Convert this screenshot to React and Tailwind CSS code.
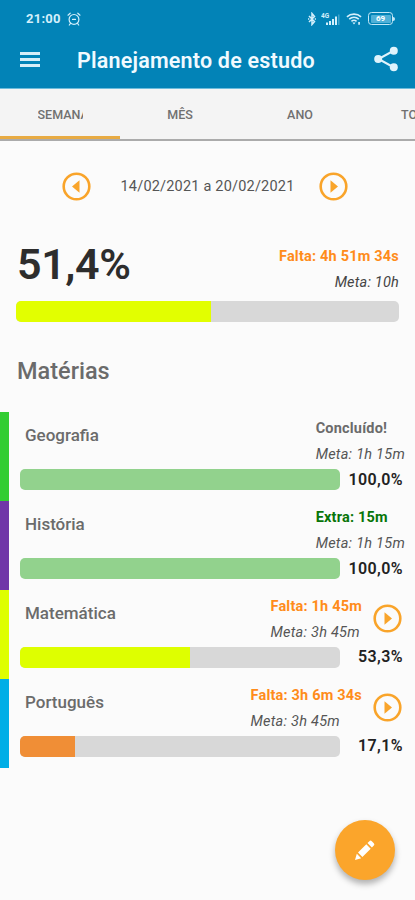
const subjects = [
  {
    name: "Geografia",
    stripe: "bg-[#32cd32]",
    fill: "bg-[#92d28d]",
    progress: 100,
    percent: "100,0%",
    status: "Concluído!",
    statusColor: "text-[#6b6b6b]",
    goal: "Meta: 1h 15m",
    playable: false,
  },
  {
    name: "História",
    stripe: "bg-[#7036a8]",
    fill: "bg-[#92d28d]",
    progress: 100,
    percent: "100,0%",
    status: "Extra: 15m",
    statusColor: "text-[#087508]",
    goal: "Meta: 1h 15m",
    playable: false,
  },
  {
    name: "Matemática",
    stripe: "bg-[#deff00]",
    fill: "bg-[#deff00]",
    progress: 53,
    percent: "53,3%",
    status: "Falta: 1h 45m",
    statusColor: "text-[#ff8c1a]",
    goal: "Meta: 3h 45m",
    playable: true,
  },
  {
    name: "Português",
    stripe: "bg-[#00aee6]",
    fill: "bg-[#f08e36]",
    progress: 17.1,
    percent: "17,1%",
    status: "Falta: 3h 6m 34s",
    statusColor: "text-[#ff8c1a]",
    goal: "Meta: 3h 45m",
    playable: true,
  },
];

function CircleArrow({ className = "" }) {
  return (
    <svg viewBox="0 0 29 29" className={`h-[29px] w-[29px] shrink-0 ${className}`}>
      <circle cx="14.5" cy="14.5" r="12.8" fill="none" stroke="#f9a42a" strokeWidth="2.6" />
      <path d="M11.5 8.3v12.4l7.5-6.2z" fill="#f9a42a" />
    </svg>
  );
}

function StatusBar() {
  return (
    <div className="flex h-[37px] items-center pl-[26px] pr-[20px] text-[#d4effb]">
      <span className="text-[13px] font-bold leading-none tracking-[0.25px]">21:00</span>
      <svg viewBox="0 0 14 14" className="ml-[6px] h-[14px] w-[14px]" fill="none" stroke="currentColor" strokeWidth="1.2" strokeLinecap="round">
        <circle cx="7" cy="7.4" r="4.9" />
        <path d="M1 3.2 3.2 1.2M13 3.2 10.8 1.2M3.5 11.4 2.3 13M10.5 11.4l1.2 1.6M5.5 7.4h3" />
      </svg>
      <div className="ml-auto flex items-center">
        <svg viewBox="0 0 8 14" className="h-[14px] w-[8px]" fill="none" stroke="currentColor" strokeWidth="1.5">
          <path d="M1 4l5.5 5.5L4 12.5v-11l2.5 3L1 10" />
          <path d="M0 7h1.3M6.7 7H8" />
        </svg>
        <svg viewBox="0 0 20 14" className="ml-[5px] h-[14px] w-[20px]" fill="currentColor">
          <text x="0" y="5.5" fontSize="6.5" fontWeight="700" fontFamily="Roboto">4G</text>
          <rect x="5" y="10.5" width="2" height="2.5" />
          <rect x="8" y="9" width="2" height="4" />
          <rect x="11" y="7" width="2" height="6" />
          <rect x="14" y="4.5" width="2" height="8.5" />
          <rect x="17" y="2.5" width="1.5" height="10.5" opacity="0.3" />
        </svg>
        <svg viewBox="0 0 17 14" className="ml-[5px] mr-[1px] h-[14px] w-[16px]" fill="none" stroke="currentColor" strokeWidth="1.7">
          <path d="M1 4.7c4.2-3.8 10.8-3.8 15 0M3.4 7.2c3-2.6 7.2-2.6 10.2 0M5.8 9.5c1.6-1.4 3.8-1.4 5.4 0" />
          <path d="M8.5 12.8 6.8 10.6h3.4zM13 10.2h1.8v2.8H13z" fill="currentColor" stroke="none" />
        </svg>
        <div className="ml-[5px] flex h-[13px] w-[25px] items-center justify-center rounded-[3.5px] border-[1.5px] border-[#c4e8f7]">
          <span className="flex h-[8px] w-[20px] items-center justify-center rounded-[1px] bg-[#4fb0d7] text-[8px] font-bold leading-none text-white">69</span>
        </div>
        <div className="h-[4px] w-[2px] rounded-r bg-[#c4e8f7]" />
      </div>
    </div>
  );
}

function Header() {
  return (
    <header className="h-[89px] border-b border-[#6dbcdc] bg-[#0283b7]">
      <StatusBar />
      <div className="flex h-[46px] items-center pl-[20px] pr-[16px]">
        <div className="flex w-[20px] flex-col gap-[3px] pb-[2px]">
          <div className="h-[3px] bg-[#d6eef8]" />
          <div className="h-[3px] bg-[#d6eef8]" />
          <div className="h-[3px] bg-[#d6eef8]" />
        </div>
        <h1 className="ml-[37px] whitespace-nowrap pt-[1px] text-[21.5px] font-semibold leading-none tracking-[0.2px] text-[#f0faff]">
          Planejamento de estudo
        </h1>
        <svg viewBox="0 0 26 26" className="mb-[2px] ml-auto h-[26px] w-[26px]" fill="#dff3fc">
          <path d="M21 4.5 5.5 13 21 21.5" fill="none" stroke="#dff3fc" strokeWidth="2" />
          <circle cx="20.8" cy="4.7" r="4" />
          <circle cx="5.2" cy="13" r="4" />
          <circle cx="20.8" cy="21.3" r="4" />
        </svg>
      </div>
    </header>
  );
}

function Tabs() {
  return (
    <nav className="h-[52px] overflow-hidden border-b-2 border-[#ababab] bg-[#f4f4f4] text-[12.5px] font-medium text-[#707070]">
      <div className="flex h-[50px] w-[480px]">
        <div className="flex w-[120px] shrink-0 justify-center border-b-[3px] border-[#e8ab43] pt-[16.5px]">
          <span className="w-[45px] overflow-hidden whitespace-nowrap">SEMANA</span>
        </div>
        <div className="w-[120px] shrink-0 pt-[16.5px] text-center">MÊS</div>
        <div className="w-[120px] shrink-0 pt-[16.5px] text-center">ANO</div>
        <div className="w-[120px] shrink-0 pl-[41px] pt-[16.5px]">TODOS</div>
      </div>
    </nav>
  );
}

function SubjectRow({ subject }) {
  return (
    <div className="flex h-[88.9px]">
      <div className={`w-[9px] shrink-0 ${subject.stripe}`} />
      <div className="flex-1 pl-[11px]">
        <div className="flex h-[57px] pl-[5px]">
          <h3 className="pt-[12px] text-[17px] font-medium leading-[22px] text-[#6b6b6b]">{subject.name}</h3>
          <div className={`ml-auto whitespace-nowrap pt-[7px] ${subject.playable ? "mr-[11px]" : "mr-[10px]"}`}>
            <p className="text-[14.5px] font-bold leading-[20px] tracking-[0.2px]">
              <span className={subject.statusColor}>{subject.status}</span>
            </p>
            <p className="pt-[6px] text-[14.5px] italic leading-[20px] tracking-[0.25px] text-[#555]">{subject.goal}</p>
          </div>
          {subject.playable && <CircleArrow className="mr-[13px] mt-[14px]" />}
        </div>
        <div className="flex h-[21px] items-center">
          <div className="h-[21px] w-[320px] overflow-hidden rounded-[5px] bg-[#d8d8d8]">
            <div className={`h-full ${subject.fill}`} style={{ width: `${subject.progress}%` }} />
          </div>
          <span className="ml-auto pr-[12px] text-[16px] font-semibold leading-none tracking-[0.4px] text-[#222]">{subject.percent}</span>
        </div>
      </div>
    </div>
  );
}

function App() {
  return (
    <div className="relative h-[900px] w-[415px] overflow-hidden bg-[#fbfbfb] font-['Roboto',sans-serif]">
      <Header />
      <Tabs />

      <div className="flex h-[90px] items-center pl-[62px]">
        <CircleArrow className="rotate-180" />
        <span className="w-[228px] pl-[5px] pt-[1px] text-center text-[14.5px] tracking-[0.2px] text-[#555]">14/02/2021 a 20/02/2021</span>
        <CircleArrow />
      </div>

      <section className="px-[16px] pt-[9px]">
        <div className="flex h-[61.2px] justify-between">
          <div className="-mt-[1px] pl-[1px] text-[43px] font-semibold leading-[50px] tracking-[-0.4px] text-[#2d2d2d]">51,4%</div>
          <div className="pt-[7px] text-right text-[14.5px] leading-[20px]">
            <p className="font-bold tracking-[0.2px] text-[#ff8c1a]">Falta: 4h 51m 34s</p>
            <p className="pt-[6px] italic tracking-[0.2px] text-[#444]">Meta: 10h</p>
          </div>
        </div>
        <div className="h-[21px] overflow-hidden rounded-[5px] bg-[#d8d8d8]">
          <div className="h-full w-[51%] bg-[#e2ff00]" />
        </div>
      </section>

      <h2 className="h-[90px] pl-[17px] pt-[34px] text-[23.5px] font-medium leading-[30px] text-[#6b6b6b]">Matérias</h2>

      {subjects.map((subject) => (
        <SubjectRow key={subject.name} subject={subject} />
      ))}

      <button className="absolute left-[335px] top-[820px] flex h-[60px] w-[60px] items-center justify-center rounded-full bg-[#fba52b] pb-[1px] shadow-[0_4px_6px_rgba(0,0,0,0.3)]">
        <svg viewBox="0 0 22 22" className="h-[22px] w-[22px]" fill="white">
          <path d="M1 21l1.8-6.2 4.4 4.4zM4 13.6l8.3-8.3 4.4 4.4L8.4 18zM13.5 4.1l1.9-1.9q1.2-1.2 2.4 0l2 2q1.2 1.2 0 2.4l-1.9 1.9z" />
        </svg>
      </button>
    </div>
  );
}

export default App;
